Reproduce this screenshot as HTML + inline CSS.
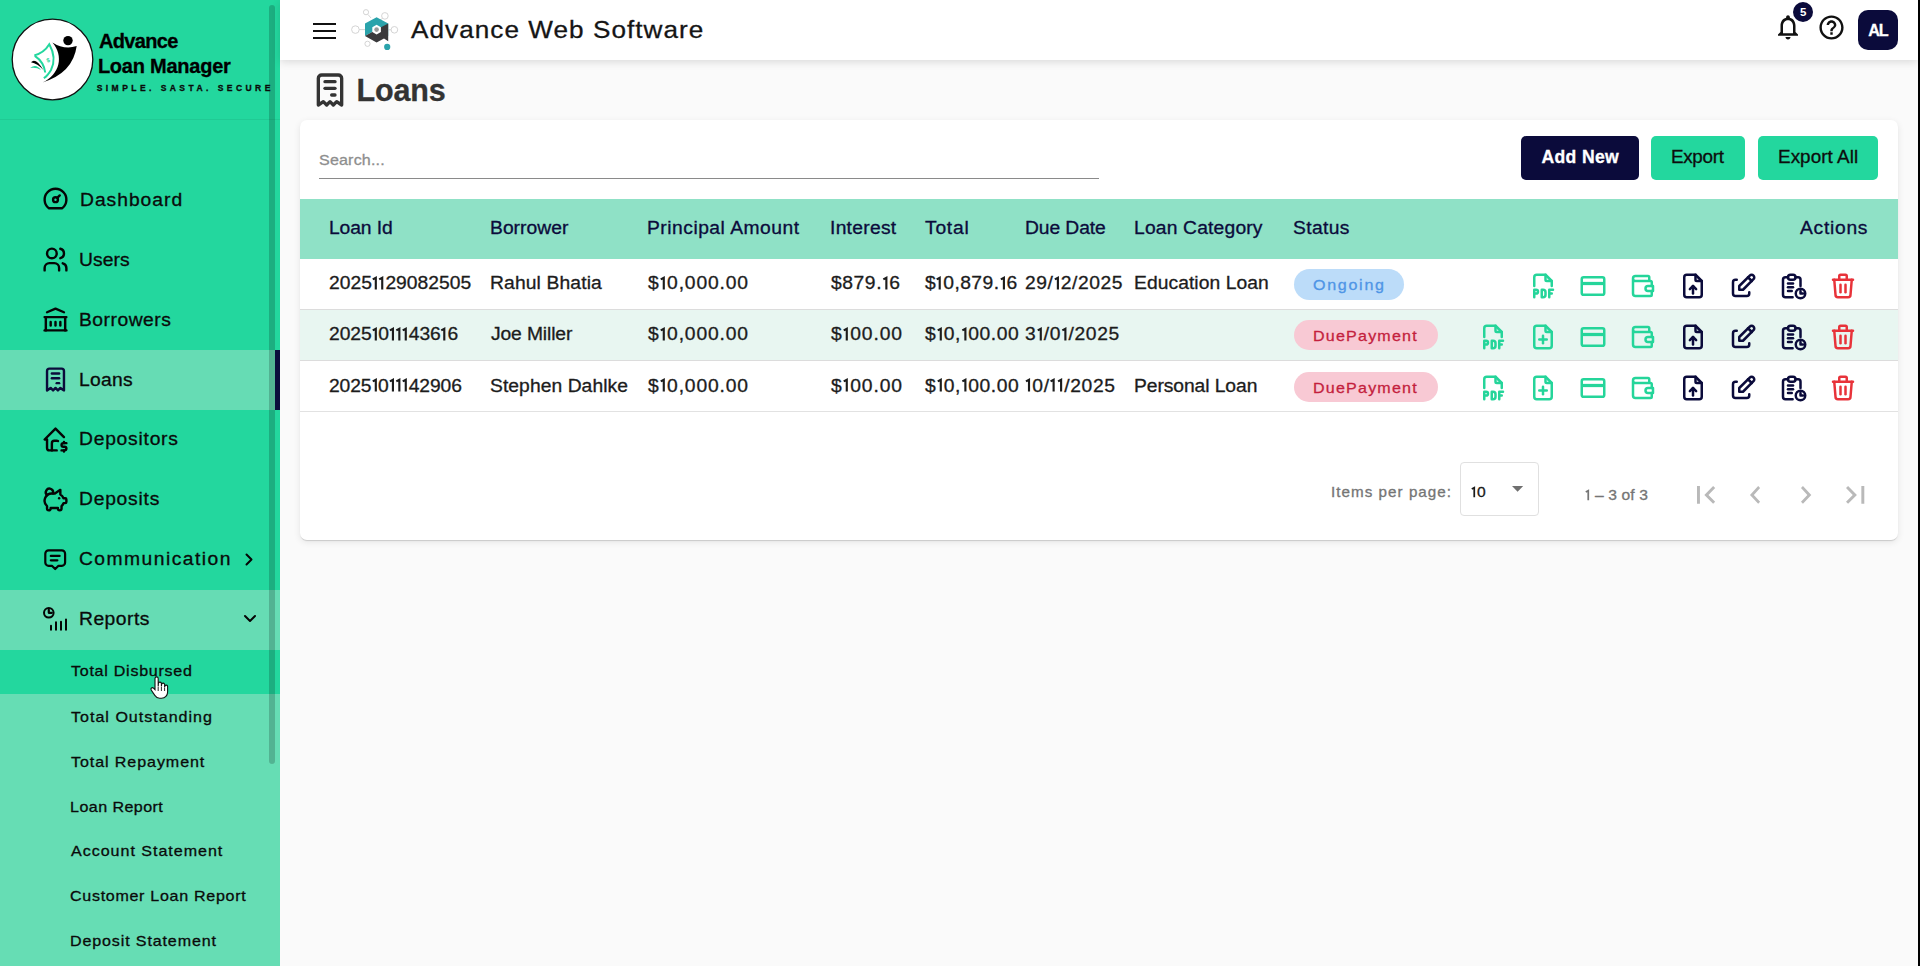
<!DOCTYPE html>
<html><head><meta charset="utf-8">
<style>
*{box-sizing:border-box;margin:0;padding:0}
html,body{width:1920px;height:966px;overflow:hidden;background:#fafafa;font-family:"Liberation Sans",sans-serif;color:#111}
.a{position:absolute}
.t{position:absolute;white-space:nowrap;line-height:1;-webkit-text-stroke:0.3px currentColor}
.nb{-webkit-text-stroke:0}
svg.one{position:static;display:inline-block;vertical-align:baseline;overflow:visible;fill:none;stroke:currentColor;stroke-width:2}
svg{position:absolute;display:block;overflow:visible}
.ic{fill:none;stroke-width:2;stroke-linecap:round;stroke-linejoin:round}
</style></head><body>
<!-- sidebar -->
<div class="a" style="left:0;top:0;width:280px;height:966px;background:#23d79e"></div>
<div class="a" style="left:0;top:119px;width:280px;height:1px;background:rgba(0,0,0,0.06)"></div>
<div class="a" style="left:0;top:350px;width:280px;height:60px;background:#66dcb4"></div>
<div class="a" style="left:0;top:590px;width:280px;height:60px;background:#66dcb4"></div>
<div class="a" style="left:0;top:694px;width:280px;height:272px;background:#66ddb4"></div>
<div class="a" style="left:275px;top:350px;width:5px;height:60px;background:#0b0b3b"></div>
<svg style="left:40.5px;top:184.0px" width="29" height="29" viewBox="0 0 24 24" class="ic" stroke="#050505" stroke-width="2" ><path d="M12 13m-2 0a2 2 0 1 0 4 0a2 2 0 1 0 -4 0"/><path d="M13.45 11.55l2.05 -2.05"/><path d="M6.4 20a9 9 0 1 1 11.2 0z"/></svg>
<svg style="left:40.5px;top:245.0px" width="29" height="29" viewBox="0 0 24 24" class="ic" stroke="#050505" stroke-width="2" ><path d="M9 7m-4 0a4 4 0 1 0 8 0a4 4 0 1 0 -8 0"/><path d="M3 21v-2a4 4 0 0 1 4 -4h4a4 4 0 0 1 4 4v2"/><path d="M16 3.13a4 4 0 0 1 0 7.75"/><path d="M21 21v-2a4 4 0 0 0 -3 -3.85"/></svg>
<svg style="left:40.5px;top:305.0px" width="29" height="29" viewBox="0 0 24 24" class="ic" stroke="#050505" stroke-width="2" ><path d="M3 21l18 0"/><path d="M3 10l18 0"/><path d="M5 6l7 -3l7 3"/><path d="M4 10l0 11"/><path d="M20 10l0 11"/><path d="M8 14l0 3"/><path d="M12 14l0 3"/><path d="M16 14l0 3"/></svg>
<svg style="left:40.5px;top:365.0px" width="29" height="29" viewBox="0 0 24 24" class="ic" stroke="#0b0b3b" stroke-width="2" ><path d="M5 21v-16a2 2 0 0 1 2 -2h10a2 2 0 0 1 2 2v16l-3 -2l-2 2l-2 -2l-2 2l-2 -2l-3 2"/><path d="M9 7h6"/><path d="M9 11h6"/><path d="M13 15h2"/></svg>
<svg style="left:40.5px;top:425.0px" width="29" height="29" viewBox="0 0 24 24" class="ic" stroke="#050505" stroke-width="2" ><path d="M19 10l-7 -7l-9 9h2v7a2 2 0 0 0 2 2h6"/><path d="M9 21v-6a2 2 0 0 1 2 -2h2c.387 0 .748 .11 1.054 .3"/><path d="M21 15h-2.5a1.5 1.5 0 0 0 0 3h1a1.5 1.5 0 0 1 0 3h-2.5"/><path d="M19 21v1m0 -8v1"/></svg>
<svg style="left:40.5px;top:485.0px" width="29" height="29" viewBox="0 0 24 24" class="ic" stroke="#050505" stroke-width="2" ><path d="M15 11v.01"/><path d="M5.173 8.378a3 3 0 1 1 4.656 -1.377"/><path d="M16 4v3.803a6.019 6.019 0 0 1 2.658 3.197h1.341a1 1 0 0 1 1 1v2a1 1 0 0 1 -1 1h-1.342c-.336 .95 -.907 1.8 -1.658 2.473v2.027a1.5 1.5 0 0 1 -3 0v-.583a6.04 6.04 0 0 1 -1 .083h-4a6.04 6.04 0 0 1 -1 -.083v.583a1.5 1.5 0 0 1 -3 0v-2l0 -.027a6 6 0 0 1 4 -10.473h2.5l4.5 -3z"/></svg>
<svg style="left:41.9px;top:546px" width="26.4" height="26.4" viewBox="0 0 24 24" class="ic" stroke="#050505" stroke-width="2.2" ><path d="M8 9h8"/><path d="M8 13h6"/><path d="M9 18h-3a3 3 0 0 1 -3 -3v-8a3 3 0 0 1 3 -3h12a3 3 0 0 1 3 3v8a3 3 0 0 1 -3 3h-3l-3 3l-3 -3z"/></svg>
<svg style="left:40px;top:603px" width="30" height="32" viewBox="0 0 30 32" class="ic" stroke="#050505" stroke-width="2.6"><circle cx="8.8" cy="9.8" r="4.8"/><path d="M8.8 6.8v3h3" stroke-width="2.2"/><path d="M11 26.85v-4M16 26.85v-7.7M21 26.85v-8.2M26 26.85v-10.3"/></svg>
<svg style="left:244px;top:553px" width="12" height="13" viewBox="0 0 12 13" class="ic" stroke="#050505" stroke-width="2"><path d="M2.5 1.5l5 5l-5 5"/></svg>
<svg style="left:243px;top:613px" width="14" height="11" viewBox="0 0 14 11" class="ic" stroke="#050505" stroke-width="2"><path d="M2 3l5 5l5 -5"/></svg>
<div class="a" style="left:269px;top:5px;width:6px;height:759px;border-radius:3px;background:rgba(0,0,0,0.19)"></div>
<svg style="left:0;top:0" width="120" height="120" viewBox="0 0 120 120"><circle cx="52.5" cy="59.5" r="40.3" fill="#fff" stroke="#111" stroke-width="1.3"/><circle cx="68" cy="40.6" r="4.7" fill="#000"/><path d="M52.4 42.4Q64 50 76.7 46.1Q73 73 42.5 82.5C60 74 64 56 52.4 42.4Z" fill="#000"/><path d="M34.3 55.4Q44 53 49.3 44.3Q57 58 51 70Q47.5 76 43.8 78.2" fill="none" stroke="#23d79e" stroke-width="2"/><path d="M34.8 55.8Q44 62 45.2 72.5" fill="none" stroke="#23d79e" stroke-width="2"/><path d="M31 62.3Q35.5 57 43.4 70Q37.5 63.5 31 62.3Z" fill="#000"/><path d="M30.2 68Q36 63 41 70Q36 66.8 30.2 68Z" fill="#23d79e"/><text x="48" y="62.3" font-size="6" font-weight="bold" fill="#23d79e" text-anchor="middle" font-family="Liberation Sans" transform="rotate(-20 48 60)">$</text></svg>
<!-- header -->
<div class="a" style="left:280px;top:0;width:1638px;height:60px;background:#fff;box-shadow:0 2px 8px rgba(0,0,0,0.13)"></div>
<!-- card -->
<div class="a" style="left:300px;top:120px;width:1598px;height:420px;background:#fff;border-radius:7px;box-shadow:0 2px 1px -1px rgba(0,0,0,.09),0 1px 1px 0 rgba(0,0,0,.06),0 2px 7px 0 rgba(0,0,0,.09)"></div>
<div class="a" style="left:319px;top:178px;width:780px;height:1px;background:#8a8a8a"></div>
<div class="a" style="left:1521px;top:136px;width:118px;height:44px;border-radius:5px;background:#0b0b3b"></div>
<div class="a" style="left:1651px;top:136px;width:94px;height:44px;border-radius:5px;background:#23d79e"></div>
<div class="a" style="left:1758px;top:136px;width:120px;height:44px;border-radius:5px;background:#23d79e"></div>
<!-- table -->
<div class="a" style="left:300px;top:199px;width:1598px;height:60px;background:#8fe1c6"></div>
<div class="a" style="left:300px;top:310px;width:1598px;height:51px;background:#e8f6f1"></div>
<div class="a" style="left:300px;top:309px;width:1598px;height:1px;background:#dcdcdc"></div>
<div class="a" style="left:300px;top:360px;width:1598px;height:1px;background:#dcdcdc"></div>
<div class="a" style="left:300px;top:411px;width:1598px;height:1px;background:#e2e2e2"></div>
<div class="a" style="left:1294px;top:269px;width:110px;height:31px;border-radius:16px;background:#bcdcf9"></div>
<div class="a" style="left:1294px;top:320px;width:144px;height:30px;border-radius:15px;background:#f8c9d4"></div>
<div class="a" style="left:1294px;top:372px;width:144px;height:30px;border-radius:15px;background:#f8c9d4"></div>
<!-- paginator -->
<div class="a" style="left:1460px;top:462px;width:79px;height:54px;border:1px solid #e0e0e0;border-radius:4px"></div>
<div class="a" style="left:313px;top:22.5px;width:23px;height:2.2px;background:#111"></div>
<div class="a" style="left:313px;top:29.5px;width:23px;height:2.2px;background:#111"></div>
<div class="a" style="left:313px;top:36.5px;width:23px;height:2.2px;background:#111"></div>
<svg style="left:345px;top:5px" width="60" height="50" viewBox="0 0 60 50"><g fill="none" stroke="#cfcfcf" stroke-width="0.9"><circle cx="21" cy="7.2" r="2.6"/><circle cx="39.9" cy="10.9" r="3.3"/><circle cx="10.4" cy="24.6" r="3.8"/><circle cx="49.4" cy="24.8" r="3.3"/><circle cx="22.5" cy="38.8" r="2.6"/><path d="M23 9.5L26 13M37.5 13.5L35 15M14.2 24.6H20M46 24.8H43.5"/></g><path d="M31.6 12.2L43.2 18.6V31L31.6 24.6L20 31V18.6Z" fill="#2aa3ab"/><path d="M20 31L31.6 24.6L43.2 18.6V36.2L39 33.6L31.6 37.5L20 31Z" fill="#3a3a3c"/><path d="M31.6 19.8L35.9 22.2V27.1L31.6 29.5L27.3 27.1V22.2Z" fill="#fff"/><circle cx="31.6" cy="24.6" r="2.3" fill="#9a9a9a"/><circle cx="42.2" cy="41.9" r="3.1" fill="#2aa3ab"/></svg>
<svg style="left:1772.8px;top:12px" width="30" height="30" viewBox="0 0 24 24" fill="#111"><path d="M12 22c1.1 0 2-.9 2-2h-4c0 1.1.89 2 2 2zm6-6v-5c0-3.07-1.64-5.64-4.5-6.32V4c0-.83-.67-1.5-1.5-1.5s-1.5.67-1.5 1.5v.68C7.63 5.36 6 7.92 6 11v5l-2 2v1h16v-1l-2-2zm-2 1H8v-6c0-2.48 1.51-4.5 4-4.5s4 2.02 4 4.5v6z"/></svg>
<div class="a" style="left:1793.2px;top:2px;width:20px;height:20px;border-radius:10px;background:#0b0b3b;color:#fff;font-size:11.5px;font-weight:bold;line-height:20px;text-align:center">5</div>
<svg style="left:1816.6px;top:13.4px" width="29" height="29" viewBox="0 0 24 24" fill="#111"><path d="M11 18h2v-2h-2v2zm1-16C6.48 2 2 6.48 2 12s4.48 10 10 10 10-4.48 10-10S17.52 2 12 2zm0 18c-4.41 0-8-3.59-8-8s3.59-8 8-8 8 3.59 8 8-3.59 8-8 8zm0-14c-2.21 0-4 1.79-4 4h2c0-1.1.9-2 2-2s2 .9 2 2c0 2-3 1.75-3 5h2c0-2.25 3-2.5 3-5 0-2.21-1.79-4-4-4z"/></svg>
<div class="a" style="left:1858px;top:10px;width:40px;height:40px;border-radius:10px;background:#0b0b3b"></div>
<svg style="left:309.6px;top:69.9px" width="40" height="40" viewBox="0 0 24 24" class="ic" stroke="#333" stroke-width="2" ><path d="M5 21v-16a2 2 0 0 1 2 -2h10a2 2 0 0 1 2 2v16l-3 -2l-2 2l-2 -2l-2 2l-2 -2l-3 2"/><path d="M9 7h6"/><path d="M9 11h6"/><path d="M13 15h2"/></svg>
<svg style="left:1528.3px;top:270.5px" width="30" height="30" viewBox="0 0 24 24" class="ic" stroke="#25d59a" stroke-width="2" ><path d="M14 3v4a1 1 0 0 0 1 1h4"/><path d="M5 12v-7a2 2 0 0 1 2 -2h7l5 5v4"/><path d="M5 18h1.5a1.5 1.5 0 0 0 0 -3h-1.5v6"/><path d="M17 18h2"/><path d="M20 15h-3v6"/><path d="M11 15v6h1a2 2 0 0 0 2 -2v-2a2 2 0 0 0 -2 -2h-1z"/></svg>
<svg style="left:1578.3px;top:270.5px" width="30" height="30" viewBox="0 0 24 24" class="ic" stroke="#25d59a" stroke-width="2" ><rect x="3" y="5" width="18" height="14" rx="1.5"/><path d="M3.5 10h17" stroke-width="2.6" stroke-linecap="butt"/></svg>
<svg style="left:1628.3px;top:270.5px" width="30" height="30" viewBox="0 0 24 24" class="ic" stroke="#25d59a" stroke-width="2" ><path d="M17 8v-3a1 1 0 0 0 -1 -1h-10a2 2 0 0 0 0 4h12a1 1 0 0 1 1 1v3m0 4v3a1 1 0 0 1 -1 1h-12a2 2 0 0 1 -2 -2v-12"/><path d="M20 12v4h-4a2 2 0 0 1 0 -4h4"/></svg>
<svg style="left:1678.3px;top:270.5px" width="30" height="30" viewBox="0 0 24 24" class="ic" stroke="#0b0b3b" stroke-width="2" ><path d="M14 3v4a1 1 0 0 0 1 1h4"/><path d="M17 21h-10a2 2 0 0 1 -2 -2v-14a2 2 0 0 1 2 -2h7l5 5v11a2 2 0 0 1 -2 2z"/><path d="M12 12v6"/><path d="M9.5 14.5l2.5 -2.5l2.5 2.5"/></svg>
<svg style="left:1728.3px;top:270.5px" width="30" height="30" viewBox="0 0 24 24" class="ic" stroke="#0b0b3b" stroke-width="2" ><path d="M7 7h-1a2 2 0 0 0 -2 2v9a2 2 0 0 0 2 2h9a2 2 0 0 0 2 -2v-1"/><path d="M20.385 6.585a2.1 2.1 0 0 0 -2.97 -2.97l-8.415 8.385v3h3l8.385 -8.415z"/><path d="M16 5l3 3"/></svg>
<svg style="left:1778.3px;top:270.5px" width="30" height="30" viewBox="0 0 24 24" class="ic" stroke="#0b0b3b" stroke-width="2" ><path d="M8 5h-2a2 2 0 0 0 -2 2v12a2 2 0 0 0 2 2h5.697"/><path d="M18 12v-5a2 2 0 0 0 -2 -2h-2"/><path d="M8 3m0 2a2 2 0 0 1 2 -2h2a2 2 0 0 1 2 2v0a2 2 0 0 1 -2 2h-2a2 2 0 0 1 -2 -2z"/><path d="M18 18m-3.8 0a3.8 3.8 0 1 0 7.6 0a3.8 3.8 0 1 0 -7.6 0"/><path d="M18 16v2h2"/><path d="M8 10h4"/><path d="M8 13h4"/><path d="M8 16h3"/></svg>
<svg style="left:1828.3px;top:270.5px" width="30" height="30" viewBox="0 0 24 24" class="ic" stroke="#e8333a" stroke-width="2" ><path d="M4 7l16 0"/><path d="M10 11l0 6"/><path d="M14 11l0 6"/><path d="M5 7l1 12a2 2 0 0 0 2 2h8a2 2 0 0 0 2 -2l1 -12"/><path d="M9 7v-3a1 1 0 0 1 1 -1h4a1 1 0 0 1 1 1v3"/></svg>
<svg style="left:1478.3px;top:321.5px" width="30" height="30" viewBox="0 0 24 24" class="ic" stroke="#25d59a" stroke-width="2" ><path d="M14 3v4a1 1 0 0 0 1 1h4"/><path d="M5 12v-7a2 2 0 0 1 2 -2h7l5 5v4"/><path d="M5 18h1.5a1.5 1.5 0 0 0 0 -3h-1.5v6"/><path d="M17 18h2"/><path d="M20 15h-3v6"/><path d="M11 15v6h1a2 2 0 0 0 2 -2v-2a2 2 0 0 0 -2 -2h-1z"/></svg>
<svg style="left:1528.3px;top:321.5px" width="30" height="30" viewBox="0 0 24 24" class="ic" stroke="#25d59a" stroke-width="2" ><path d="M14 3v4a1 1 0 0 0 1 1h4"/><path d="M17 21h-10a2 2 0 0 1 -2 -2v-14a2 2 0 0 1 2 -2h7l5 5v11a2 2 0 0 1 -2 2z"/><path d="M12 11l0 6"/><path d="M9 14l6 0"/></svg>
<svg style="left:1578.3px;top:321.5px" width="30" height="30" viewBox="0 0 24 24" class="ic" stroke="#25d59a" stroke-width="2" ><rect x="3" y="5" width="18" height="14" rx="1.5"/><path d="M3.5 10h17" stroke-width="2.6" stroke-linecap="butt"/></svg>
<svg style="left:1628.3px;top:321.5px" width="30" height="30" viewBox="0 0 24 24" class="ic" stroke="#25d59a" stroke-width="2" ><path d="M17 8v-3a1 1 0 0 0 -1 -1h-10a2 2 0 0 0 0 4h12a1 1 0 0 1 1 1v3m0 4v3a1 1 0 0 1 -1 1h-12a2 2 0 0 1 -2 -2v-12"/><path d="M20 12v4h-4a2 2 0 0 1 0 -4h4"/></svg>
<svg style="left:1678.3px;top:321.5px" width="30" height="30" viewBox="0 0 24 24" class="ic" stroke="#0b0b3b" stroke-width="2" ><path d="M14 3v4a1 1 0 0 0 1 1h4"/><path d="M17 21h-10a2 2 0 0 1 -2 -2v-14a2 2 0 0 1 2 -2h7l5 5v11a2 2 0 0 1 -2 2z"/><path d="M12 12v6"/><path d="M9.5 14.5l2.5 -2.5l2.5 2.5"/></svg>
<svg style="left:1728.3px;top:321.5px" width="30" height="30" viewBox="0 0 24 24" class="ic" stroke="#0b0b3b" stroke-width="2" ><path d="M7 7h-1a2 2 0 0 0 -2 2v9a2 2 0 0 0 2 2h9a2 2 0 0 0 2 -2v-1"/><path d="M20.385 6.585a2.1 2.1 0 0 0 -2.97 -2.97l-8.415 8.385v3h3l8.385 -8.415z"/><path d="M16 5l3 3"/></svg>
<svg style="left:1778.3px;top:321.5px" width="30" height="30" viewBox="0 0 24 24" class="ic" stroke="#0b0b3b" stroke-width="2" ><path d="M8 5h-2a2 2 0 0 0 -2 2v12a2 2 0 0 0 2 2h5.697"/><path d="M18 12v-5a2 2 0 0 0 -2 -2h-2"/><path d="M8 3m0 2a2 2 0 0 1 2 -2h2a2 2 0 0 1 2 2v0a2 2 0 0 1 -2 2h-2a2 2 0 0 1 -2 -2z"/><path d="M18 18m-3.8 0a3.8 3.8 0 1 0 7.6 0a3.8 3.8 0 1 0 -7.6 0"/><path d="M18 16v2h2"/><path d="M8 10h4"/><path d="M8 13h4"/><path d="M8 16h3"/></svg>
<svg style="left:1828.3px;top:321.5px" width="30" height="30" viewBox="0 0 24 24" class="ic" stroke="#e8333a" stroke-width="2" ><path d="M4 7l16 0"/><path d="M10 11l0 6"/><path d="M14 11l0 6"/><path d="M5 7l1 12a2 2 0 0 0 2 2h8a2 2 0 0 0 2 -2l1 -12"/><path d="M9 7v-3a1 1 0 0 1 1 -1h4a1 1 0 0 1 1 1v3"/></svg>
<svg style="left:1478.3px;top:372.5px" width="30" height="30" viewBox="0 0 24 24" class="ic" stroke="#25d59a" stroke-width="2" ><path d="M14 3v4a1 1 0 0 0 1 1h4"/><path d="M5 12v-7a2 2 0 0 1 2 -2h7l5 5v4"/><path d="M5 18h1.5a1.5 1.5 0 0 0 0 -3h-1.5v6"/><path d="M17 18h2"/><path d="M20 15h-3v6"/><path d="M11 15v6h1a2 2 0 0 0 2 -2v-2a2 2 0 0 0 -2 -2h-1z"/></svg>
<svg style="left:1528.3px;top:372.5px" width="30" height="30" viewBox="0 0 24 24" class="ic" stroke="#25d59a" stroke-width="2" ><path d="M14 3v4a1 1 0 0 0 1 1h4"/><path d="M17 21h-10a2 2 0 0 1 -2 -2v-14a2 2 0 0 1 2 -2h7l5 5v11a2 2 0 0 1 -2 2z"/><path d="M12 11l0 6"/><path d="M9 14l6 0"/></svg>
<svg style="left:1578.3px;top:372.5px" width="30" height="30" viewBox="0 0 24 24" class="ic" stroke="#25d59a" stroke-width="2" ><rect x="3" y="5" width="18" height="14" rx="1.5"/><path d="M3.5 10h17" stroke-width="2.6" stroke-linecap="butt"/></svg>
<svg style="left:1628.3px;top:372.5px" width="30" height="30" viewBox="0 0 24 24" class="ic" stroke="#25d59a" stroke-width="2" ><path d="M17 8v-3a1 1 0 0 0 -1 -1h-10a2 2 0 0 0 0 4h12a1 1 0 0 1 1 1v3m0 4v3a1 1 0 0 1 -1 1h-12a2 2 0 0 1 -2 -2v-12"/><path d="M20 12v4h-4a2 2 0 0 1 0 -4h4"/></svg>
<svg style="left:1678.3px;top:372.5px" width="30" height="30" viewBox="0 0 24 24" class="ic" stroke="#0b0b3b" stroke-width="2" ><path d="M14 3v4a1 1 0 0 0 1 1h4"/><path d="M17 21h-10a2 2 0 0 1 -2 -2v-14a2 2 0 0 1 2 -2h7l5 5v11a2 2 0 0 1 -2 2z"/><path d="M12 12v6"/><path d="M9.5 14.5l2.5 -2.5l2.5 2.5"/></svg>
<svg style="left:1728.3px;top:372.5px" width="30" height="30" viewBox="0 0 24 24" class="ic" stroke="#0b0b3b" stroke-width="2" ><path d="M7 7h-1a2 2 0 0 0 -2 2v9a2 2 0 0 0 2 2h9a2 2 0 0 0 2 -2v-1"/><path d="M20.385 6.585a2.1 2.1 0 0 0 -2.97 -2.97l-8.415 8.385v3h3l8.385 -8.415z"/><path d="M16 5l3 3"/></svg>
<svg style="left:1778.3px;top:372.5px" width="30" height="30" viewBox="0 0 24 24" class="ic" stroke="#0b0b3b" stroke-width="2" ><path d="M8 5h-2a2 2 0 0 0 -2 2v12a2 2 0 0 0 2 2h5.697"/><path d="M18 12v-5a2 2 0 0 0 -2 -2h-2"/><path d="M8 3m0 2a2 2 0 0 1 2 -2h2a2 2 0 0 1 2 2v0a2 2 0 0 1 -2 2h-2a2 2 0 0 1 -2 -2z"/><path d="M18 18m-3.8 0a3.8 3.8 0 1 0 7.6 0a3.8 3.8 0 1 0 -7.6 0"/><path d="M18 16v2h2"/><path d="M8 10h4"/><path d="M8 13h4"/><path d="M8 16h3"/></svg>
<svg style="left:1828.3px;top:372.5px" width="30" height="30" viewBox="0 0 24 24" class="ic" stroke="#e8333a" stroke-width="2" ><path d="M4 7l16 0"/><path d="M10 11l0 6"/><path d="M14 11l0 6"/><path d="M5 7l1 12a2 2 0 0 0 2 2h8a2 2 0 0 0 2 -2l1 -12"/><path d="M9 7v-3a1 1 0 0 1 1 -1h4a1 1 0 0 1 1 1v3"/></svg>
<svg style="left:1696.6px;top:485.8px" width="18.2" height="17.8" viewBox="6 6 12.41 12" preserveAspectRatio="none" fill="#b9b9b9"><path d="M18.41 16.59L13.82 12l4.59-4.59L17 6l-6 6 6 6zM6 6h2v12H6z"/></svg>
<svg style="left:1750px;top:485.8px" width="10.1" height="17.8" viewBox="8 6 7.41 12" preserveAspectRatio="none" fill="#b9b9b9"><path d="M15.41 7.41L14 6l-6 6 6 6 1.41-1.41L10.83 12z"/></svg>
<svg style="left:1800.6px;top:485.8px" width="10.3" height="17.8" viewBox="8.59 6 7.41 12" preserveAspectRatio="none" fill="#b9b9b9"><path d="M10 6L8.59 7.41 13.17 12l-4.58 4.59L10 18l6-6z"/></svg>
<svg style="left:1846px;top:485.8px" width="18.3" height="17.8" viewBox="5.59 6 12.41 12" preserveAspectRatio="none" fill="#b9b9b9"><path d="M5.59 7.41L10.18 12l-4.59 4.59L7 18l6-6-6-6zM16 6h2v12h-2z"/></svg>
<svg style="left:1512px;top:485.5px" width="11.2" height="5.8" viewBox="0 0 10 5" preserveAspectRatio="none" fill="#6f6f6f"><path d="M0 0l5 5l5 -5z"/></svg>
<svg style="left:148px;top:675px" width="22" height="26" viewBox="0 0 22 26"><path d="M7 3.5a1.6 1.6 0 0 1 3.2 0v8l0.2 -3a1.5 1.5 0 0 1 3 0.2v2.8l0.2 -2a1.5 1.5 0 0 1 3 0.2v2.5l0.3 -1.2a1.4 1.4 0 0 1 2.7 0.4v5.5c0 3.5 -2.5 6.3 -6 6.3h-2c-2.3 0 -3.6 -1 -4.8 -2.8l-3.6 -5.4a1.5 1.5 0 0 1 2.3 -1.9l1.5 1.6z" fill="#fff" stroke="#111" stroke-width="1.1"/><path d="M10.2 12v4M13.4 12v4M16.6 12.5v3.5" stroke="#111" stroke-width="0.9"/></svg>
<div class="t" style="left:79.50px;top:190.76px;font-size:18px;letter-spacing:0.925px;color:#0a0a0a;transform:scaleX(1.07);transform-origin:0 0">Dashboard</div>
<div class="t" style="left:79.40px;top:250.76px;font-size:18px;letter-spacing:0.100px;color:#0a0a0a;transform:scaleX(1.07);transform-origin:0 0">Users</div>
<div class="t" style="left:79.40px;top:310.76px;font-size:18px;letter-spacing:0.475px;color:#0a0a0a;transform:scaleX(1.07);transform-origin:0 0">Borrowers</div>
<div class="t" style="left:79.40px;top:370.76px;font-size:18px;letter-spacing:0.250px;color:#0a0a0a;transform:scaleX(1.07);transform-origin:0 0">Loans</div>
<div class="t" style="left:79.30px;top:430.46px;font-size:18px;letter-spacing:0.711px;color:#0a0a0a;transform:scaleX(1.07);transform-origin:0 0">Depositors</div>
<div class="t" style="left:79.30px;top:490.36px;font-size:18px;letter-spacing:0.714px;color:#0a0a0a;transform:scaleX(1.07);transform-origin:0 0">Deposits</div>
<div class="t" style="left:79.30px;top:550.26px;font-size:18px;letter-spacing:1.367px;color:#0a0a0a;transform:scaleX(1.07);transform-origin:0 0">Communication</div>
<div class="t" style="left:79.30px;top:610.26px;font-size:18px;letter-spacing:0.467px;color:#0a0a0a;transform:scaleX(1.07);transform-origin:0 0">Reports</div>
<div class="t" style="left:70.90px;top:663.40px;font-size:15px;letter-spacing:0.686px;color:#0a0a0a;transform:scaleX(1.07);transform-origin:0 0">Total Disbursed</div>
<div class="t" style="left:70.90px;top:708.60px;font-size:15px;letter-spacing:0.938px;color:#0a0a0a;transform:scaleX(1.07);transform-origin:0 0">Total Outstanding</div>
<div class="t" style="left:70.90px;top:753.60px;font-size:15px;letter-spacing:0.857px;color:#0a0a0a;transform:scaleX(1.07);transform-origin:0 0">Total Repayment</div>
<div class="t" style="left:69.90px;top:798.60px;font-size:15px;letter-spacing:0.420px;color:#0a0a0a;transform:scaleX(1.07);transform-origin:0 0">Loan Report</div>
<div class="t" style="left:70.50px;top:843.40px;font-size:15px;letter-spacing:0.913px;color:#0a0a0a;transform:scaleX(1.07);transform-origin:0 0">Account Statement</div>
<div class="t" style="left:69.50px;top:888.30px;font-size:15px;letter-spacing:0.653px;color:#0a0a0a;transform:scaleX(1.07);transform-origin:0 0">Customer Loan Report</div>
<div class="t" style="left:69.50px;top:933.30px;font-size:15px;letter-spacing:0.812px;color:#0a0a0a;transform:scaleX(1.07);transform-origin:0 0">Deposit Statement</div>
<div class="t" style="left:98.90px;top:31.37px;font-size:20px;letter-spacing:-0.667px;color:#000;font-weight:bold">Advance</div>
<div class="t" style="left:97.90px;top:56.07px;font-size:20px;letter-spacing:-0.236px;color:#000;font-weight:bold">Loan Manager</div>
<div class="t" style="left:96.70px;top:83.60px;font-size:8.5px;letter-spacing:3.450px;color:#0a0a0a;font-weight:bold">SIMPLE. SASTA. SECURE</div>
<div class="t" style="left:411.10px;top:17.64px;font-size:24.4px;letter-spacing:0.989px;color:#151515;transform:scaleX(1.07);transform-origin:0 0">Advance Web Software</div>
<div class="t" style="left:1868.20px;top:22.18px;font-size:16.2px;letter-spacing:-1.200px;color:#fff;font-weight:bold">AL</div>
<div class="t" style="left:356.60px;top:74.78px;font-size:30.5px;letter-spacing:-0.150px;color:#333333;font-weight:bold">Loans</div>
<div class="t" style="left:319.00px;top:152.30px;font-size:15px;letter-spacing:0.175px;color:#8e8e8e;transform:scaleX(1.07);transform-origin:0 0">Search...</div>
<div class="t" style="left:1541.50px;top:149.10px;font-size:17.6px;letter-spacing:0.333px;color:#ffffff;font-weight:bold">Add New</div>
<div class="t" style="left:1671.10px;top:149.10px;font-size:17.6px;letter-spacing:-0.280px;color:#0d0d0d;transform:scaleX(1.07);transform-origin:0 0">Export</div>
<div class="t" style="left:1777.50px;top:149.10px;font-size:17.6px;letter-spacing:0.067px;color:#0d0d0d;transform:scaleX(1.07);transform-origin:0 0">Export All</div>
<div class="t" style="left:329.40px;top:218.96px;font-size:18px;letter-spacing:-0.100px;color:#0b0b3b;transform:scaleX(1.07);transform-origin:0 0">Loan Id</div>
<div class="t" style="left:490.10px;top:218.96px;font-size:18px;letter-spacing:0.029px;color:#0b0b3b;transform:scaleX(1.07);transform-origin:0 0">Borrower</div>
<div class="t" style="left:646.60px;top:218.96px;font-size:18px;letter-spacing:0.467px;color:#0b0b3b;transform:scaleX(1.07);transform-origin:0 0">Principal Amount</div>
<div class="t" style="left:829.90px;top:218.96px;font-size:18px;letter-spacing:0.257px;color:#0b0b3b;transform:scaleX(1.07);transform-origin:0 0">Interest</div>
<div class="t" style="left:925.10px;top:218.96px;font-size:18px;letter-spacing:0.700px;color:#0b0b3b;transform:scaleX(1.07);transform-origin:0 0">Total</div>
<div class="t" style="left:1025.20px;top:218.96px;font-size:18px;letter-spacing:-0.086px;color:#0b0b3b;transform:scaleX(1.07);transform-origin:0 0">Due Date</div>
<div class="t" style="left:1134.10px;top:218.96px;font-size:18px;letter-spacing:0.167px;color:#0b0b3b;transform:scaleX(1.07);transform-origin:0 0">Loan Category</div>
<div class="t" style="left:1293.10px;top:218.96px;font-size:18px;letter-spacing:0.320px;color:#0b0b3b;transform:scaleX(1.07);transform-origin:0 0">Status</div>
<div class="t" style="left:1800.30px;top:218.96px;font-size:18px;letter-spacing:0.667px;color:#0b0b3b;transform:scaleX(1.07);transform-origin:0 0">Actions</div>
<div class="t" style="left:328.90px;top:274.46px;font-size:18px;letter-spacing:0.015px;color:#1c1c1c;transform:scaleX(1.07);transform-origin:0 0">2025<svg class="one" viewBox="0 0 6.3 12.6" preserveAspectRatio="none" style="width:6.300px;height:12.600px;margin-right:0.015px"><path d="M0.9 2.4L3.75 0.8V12.6"/></svg><svg class="one" viewBox="0 0 6.3 12.6" preserveAspectRatio="none" style="width:6.300px;height:12.600px;margin-right:0.015px"><path d="M0.9 2.4L3.75 0.8V12.6"/></svg>29082505</div>
<div class="t" style="left:490.10px;top:274.46px;font-size:18px;letter-spacing:0.127px;color:#1c1c1c;transform:scaleX(1.07);transform-origin:0 0">Rahul Bhatia</div>
<div class="t" style="left:647.60px;top:274.46px;font-size:18px;letter-spacing:0.778px;color:#1c1c1c;transform:scaleX(1.07);transform-origin:0 0">$<svg class="one" viewBox="0 0 6.3 12.6" preserveAspectRatio="none" style="width:6.300px;height:12.600px;margin-right:0.778px"><path d="M0.9 2.4L3.75 0.8V12.6"/></svg>0,000.00</div>
<div class="t" style="left:831.00px;top:274.46px;font-size:18px;letter-spacing:0.533px;color:#1c1c1c;transform:scaleX(1.07);transform-origin:0 0">$879.<svg class="one" viewBox="0 0 6.3 12.6" preserveAspectRatio="none" style="width:6.300px;height:12.600px;margin-right:0.533px"><path d="M0.9 2.4L3.75 0.8V12.6"/></svg>6</div>
<div class="t" style="left:924.80px;top:274.46px;font-size:18px;letter-spacing:0.400px;color:#1c1c1c;transform:scaleX(1.07);transform-origin:0 0">$<svg class="one" viewBox="0 0 6.3 12.6" preserveAspectRatio="none" style="width:6.300px;height:12.600px;margin-right:0.400px"><path d="M0.9 2.4L3.75 0.8V12.6"/></svg>0,879.<svg class="one" viewBox="0 0 6.3 12.6" preserveAspectRatio="none" style="width:6.300px;height:12.600px;margin-right:0.400px"><path d="M0.9 2.4L3.75 0.8V12.6"/></svg>6</div>
<div class="t" style="left:1025.40px;top:274.46px;font-size:18px;letter-spacing:0.533px;color:#1c1c1c;transform:scaleX(1.07);transform-origin:0 0">29/<svg class="one" viewBox="0 0 6.3 12.6" preserveAspectRatio="none" style="width:6.300px;height:12.600px;margin-right:0.533px"><path d="M0.9 2.4L3.75 0.8V12.6"/></svg>2/2025</div>
<div class="t" style="left:1134.10px;top:274.46px;font-size:18px;letter-spacing:0.062px;color:#1c1c1c;transform:scaleX(1.07);transform-origin:0 0">Education Loan</div>
<div class="t" style="left:329.00px;top:325.46px;font-size:18px;letter-spacing:-0.077px;color:#1c1c1c;transform:scaleX(1.07);transform-origin:0 0">2025<svg class="one" viewBox="0 0 6.3 12.6" preserveAspectRatio="none" style="width:6.300px;height:12.600px;margin-right:-0.077px"><path d="M0.9 2.4L3.75 0.8V12.6"/></svg>0<svg class="one" viewBox="0 0 6.3 12.6" preserveAspectRatio="none" style="width:6.300px;height:12.600px;margin-right:-0.077px"><path d="M0.9 2.4L3.75 0.8V12.6"/></svg><svg class="one" viewBox="0 0 6.3 12.6" preserveAspectRatio="none" style="width:6.300px;height:12.600px;margin-right:-0.077px"><path d="M0.9 2.4L3.75 0.8V12.6"/></svg><svg class="one" viewBox="0 0 6.3 12.6" preserveAspectRatio="none" style="width:6.300px;height:12.600px;margin-right:-0.077px"><path d="M0.9 2.4L3.75 0.8V12.6"/></svg>436<svg class="one" viewBox="0 0 6.3 12.6" preserveAspectRatio="none" style="width:6.300px;height:12.600px;margin-right:-0.077px"><path d="M0.9 2.4L3.75 0.8V12.6"/></svg>6</div>
<div class="t" style="left:491.10px;top:325.46px;font-size:18px;letter-spacing:-0.111px;color:#1c1c1c;transform:scaleX(1.07);transform-origin:0 0">Joe Miller</div>
<div class="t" style="left:647.60px;top:325.46px;font-size:18px;letter-spacing:0.778px;color:#1c1c1c;transform:scaleX(1.07);transform-origin:0 0">$<svg class="one" viewBox="0 0 6.3 12.6" preserveAspectRatio="none" style="width:6.300px;height:12.600px;margin-right:0.778px"><path d="M0.9 2.4L3.75 0.8V12.6"/></svg>0,000.00</div>
<div class="t" style="left:831.00px;top:325.46px;font-size:18px;letter-spacing:0.833px;color:#1c1c1c;transform:scaleX(1.07);transform-origin:0 0">$<svg class="one" viewBox="0 0 6.3 12.6" preserveAspectRatio="none" style="width:6.300px;height:12.600px;margin-right:0.833px"><path d="M0.9 2.4L3.75 0.8V12.6"/></svg>00.00</div>
<div class="t" style="left:924.80px;top:325.46px;font-size:18px;letter-spacing:0.556px;color:#1c1c1c;transform:scaleX(1.07);transform-origin:0 0">$<svg class="one" viewBox="0 0 6.3 12.6" preserveAspectRatio="none" style="width:6.300px;height:12.600px;margin-right:0.556px"><path d="M0.9 2.4L3.75 0.8V12.6"/></svg>0,<svg class="one" viewBox="0 0 6.3 12.6" preserveAspectRatio="none" style="width:6.300px;height:12.600px;margin-right:0.556px"><path d="M0.9 2.4L3.75 0.8V12.6"/></svg>00.00</div>
<div class="t" style="left:1025.40px;top:325.46px;font-size:18px;letter-spacing:0.600px;color:#1c1c1c;transform:scaleX(1.07);transform-origin:0 0">3<svg class="one" viewBox="0 0 6.3 12.6" preserveAspectRatio="none" style="width:6.300px;height:12.600px;margin-right:0.600px"><path d="M0.9 2.4L3.75 0.8V12.6"/></svg>/0<svg class="one" viewBox="0 0 6.3 12.6" preserveAspectRatio="none" style="width:6.300px;height:12.600px;margin-right:0.600px"><path d="M0.9 2.4L3.75 0.8V12.6"/></svg>/2025</div>
<div class="t" style="left:329.00px;top:376.96px;font-size:18px;letter-spacing:-0.092px;color:#1c1c1c;transform:scaleX(1.07);transform-origin:0 0">2025<svg class="one" viewBox="0 0 6.3 12.6" preserveAspectRatio="none" style="width:6.300px;height:12.600px;margin-right:-0.092px"><path d="M0.9 2.4L3.75 0.8V12.6"/></svg>0<svg class="one" viewBox="0 0 6.3 12.6" preserveAspectRatio="none" style="width:6.300px;height:12.600px;margin-right:-0.092px"><path d="M0.9 2.4L3.75 0.8V12.6"/></svg><svg class="one" viewBox="0 0 6.3 12.6" preserveAspectRatio="none" style="width:6.300px;height:12.600px;margin-right:-0.092px"><path d="M0.9 2.4L3.75 0.8V12.6"/></svg><svg class="one" viewBox="0 0 6.3 12.6" preserveAspectRatio="none" style="width:6.300px;height:12.600px;margin-right:-0.092px"><path d="M0.9 2.4L3.75 0.8V12.6"/></svg>42906</div>
<div class="t" style="left:490.10px;top:376.96px;font-size:18px;letter-spacing:0.062px;color:#1c1c1c;transform:scaleX(1.07);transform-origin:0 0">Stephen Dahlke</div>
<div class="t" style="left:647.60px;top:376.96px;font-size:18px;letter-spacing:0.778px;color:#1c1c1c;transform:scaleX(1.07);transform-origin:0 0">$<svg class="one" viewBox="0 0 6.3 12.6" preserveAspectRatio="none" style="width:6.300px;height:12.600px;margin-right:0.778px"><path d="M0.9 2.4L3.75 0.8V12.6"/></svg>0,000.00</div>
<div class="t" style="left:831.00px;top:376.96px;font-size:18px;letter-spacing:0.833px;color:#1c1c1c;transform:scaleX(1.07);transform-origin:0 0">$<svg class="one" viewBox="0 0 6.3 12.6" preserveAspectRatio="none" style="width:6.300px;height:12.600px;margin-right:0.833px"><path d="M0.9 2.4L3.75 0.8V12.6"/></svg>00.00</div>
<div class="t" style="left:924.80px;top:376.96px;font-size:18px;letter-spacing:0.556px;color:#1c1c1c;transform:scaleX(1.07);transform-origin:0 0">$<svg class="one" viewBox="0 0 6.3 12.6" preserveAspectRatio="none" style="width:6.300px;height:12.600px;margin-right:0.556px"><path d="M0.9 2.4L3.75 0.8V12.6"/></svg>0,<svg class="one" viewBox="0 0 6.3 12.6" preserveAspectRatio="none" style="width:6.300px;height:12.600px;margin-right:0.556px"><path d="M0.9 2.4L3.75 0.8V12.6"/></svg>00.00</div>
<div class="t" style="left:1025.40px;top:376.96px;font-size:18px;letter-spacing:0.578px;color:#1c1c1c;transform:scaleX(1.07);transform-origin:0 0"><svg class="one" viewBox="0 0 6.3 12.6" preserveAspectRatio="none" style="width:6.300px;height:12.600px;margin-right:0.578px"><path d="M0.9 2.4L3.75 0.8V12.6"/></svg>0/<svg class="one" viewBox="0 0 6.3 12.6" preserveAspectRatio="none" style="width:6.300px;height:12.600px;margin-right:0.578px"><path d="M0.9 2.4L3.75 0.8V12.6"/></svg><svg class="one" viewBox="0 0 6.3 12.6" preserveAspectRatio="none" style="width:6.300px;height:12.600px;margin-right:0.578px"><path d="M0.9 2.4L3.75 0.8V12.6"/></svg>/2025</div>
<div class="t" style="left:1134.10px;top:376.96px;font-size:18px;letter-spacing:-0.067px;color:#1c1c1c;transform:scaleX(1.07);transform-origin:0 0">Personal Loan</div>
<div class="t" style="left:1313.00px;top:276.80px;font-size:15px;letter-spacing:1.600px;color:#4f95e6;transform:scaleX(1.07);transform-origin:0 0">Ongoing</div>
<div class="t" style="left:1313.00px;top:327.90px;font-size:15px;letter-spacing:1.133px;color:#c41f3e;transform:scaleX(1.07);transform-origin:0 0">DuePayment</div>
<div class="t" style="left:1313.00px;top:379.70px;font-size:15px;letter-spacing:1.133px;color:#c41f3e;transform:scaleX(1.07);transform-origin:0 0">DuePayment</div>
<div class="t" style="left:1330.50px;top:485.48px;font-size:14.2px;letter-spacing:0.971px;color:#757575;transform:scaleX(1.07);transform-origin:0 0">Items per page:</div>
<div class="t" style="left:1471.40px;top:485.14px;font-size:14.6px;letter-spacing:0.400px;color:#1a1a1a;transform:scaleX(1.07);transform-origin:0 0"><svg class="one" viewBox="0 0 6.3 12.6" preserveAspectRatio="none" style="width:5.110px;height:10.220px;margin-right:0.400px"><path d="M0.9 2.4L3.75 0.8V12.6"/></svg>0</div>
<div class="t" style="left:1585.10px;top:487.84px;font-size:14.6px;letter-spacing:0.111px;color:#757575;transform:scaleX(1.07);transform-origin:0 0"><svg class="one" viewBox="0 0 6.3 12.6" preserveAspectRatio="none" style="width:5.110px;height:10.220px;margin-right:0.111px"><path d="M0.9 2.4L3.75 0.8V12.6"/></svg> – 3 of 3</div>
<div class="a" style="left:1918px;top:0;width:2px;height:966px;background:#000"></div>
</body></html>
